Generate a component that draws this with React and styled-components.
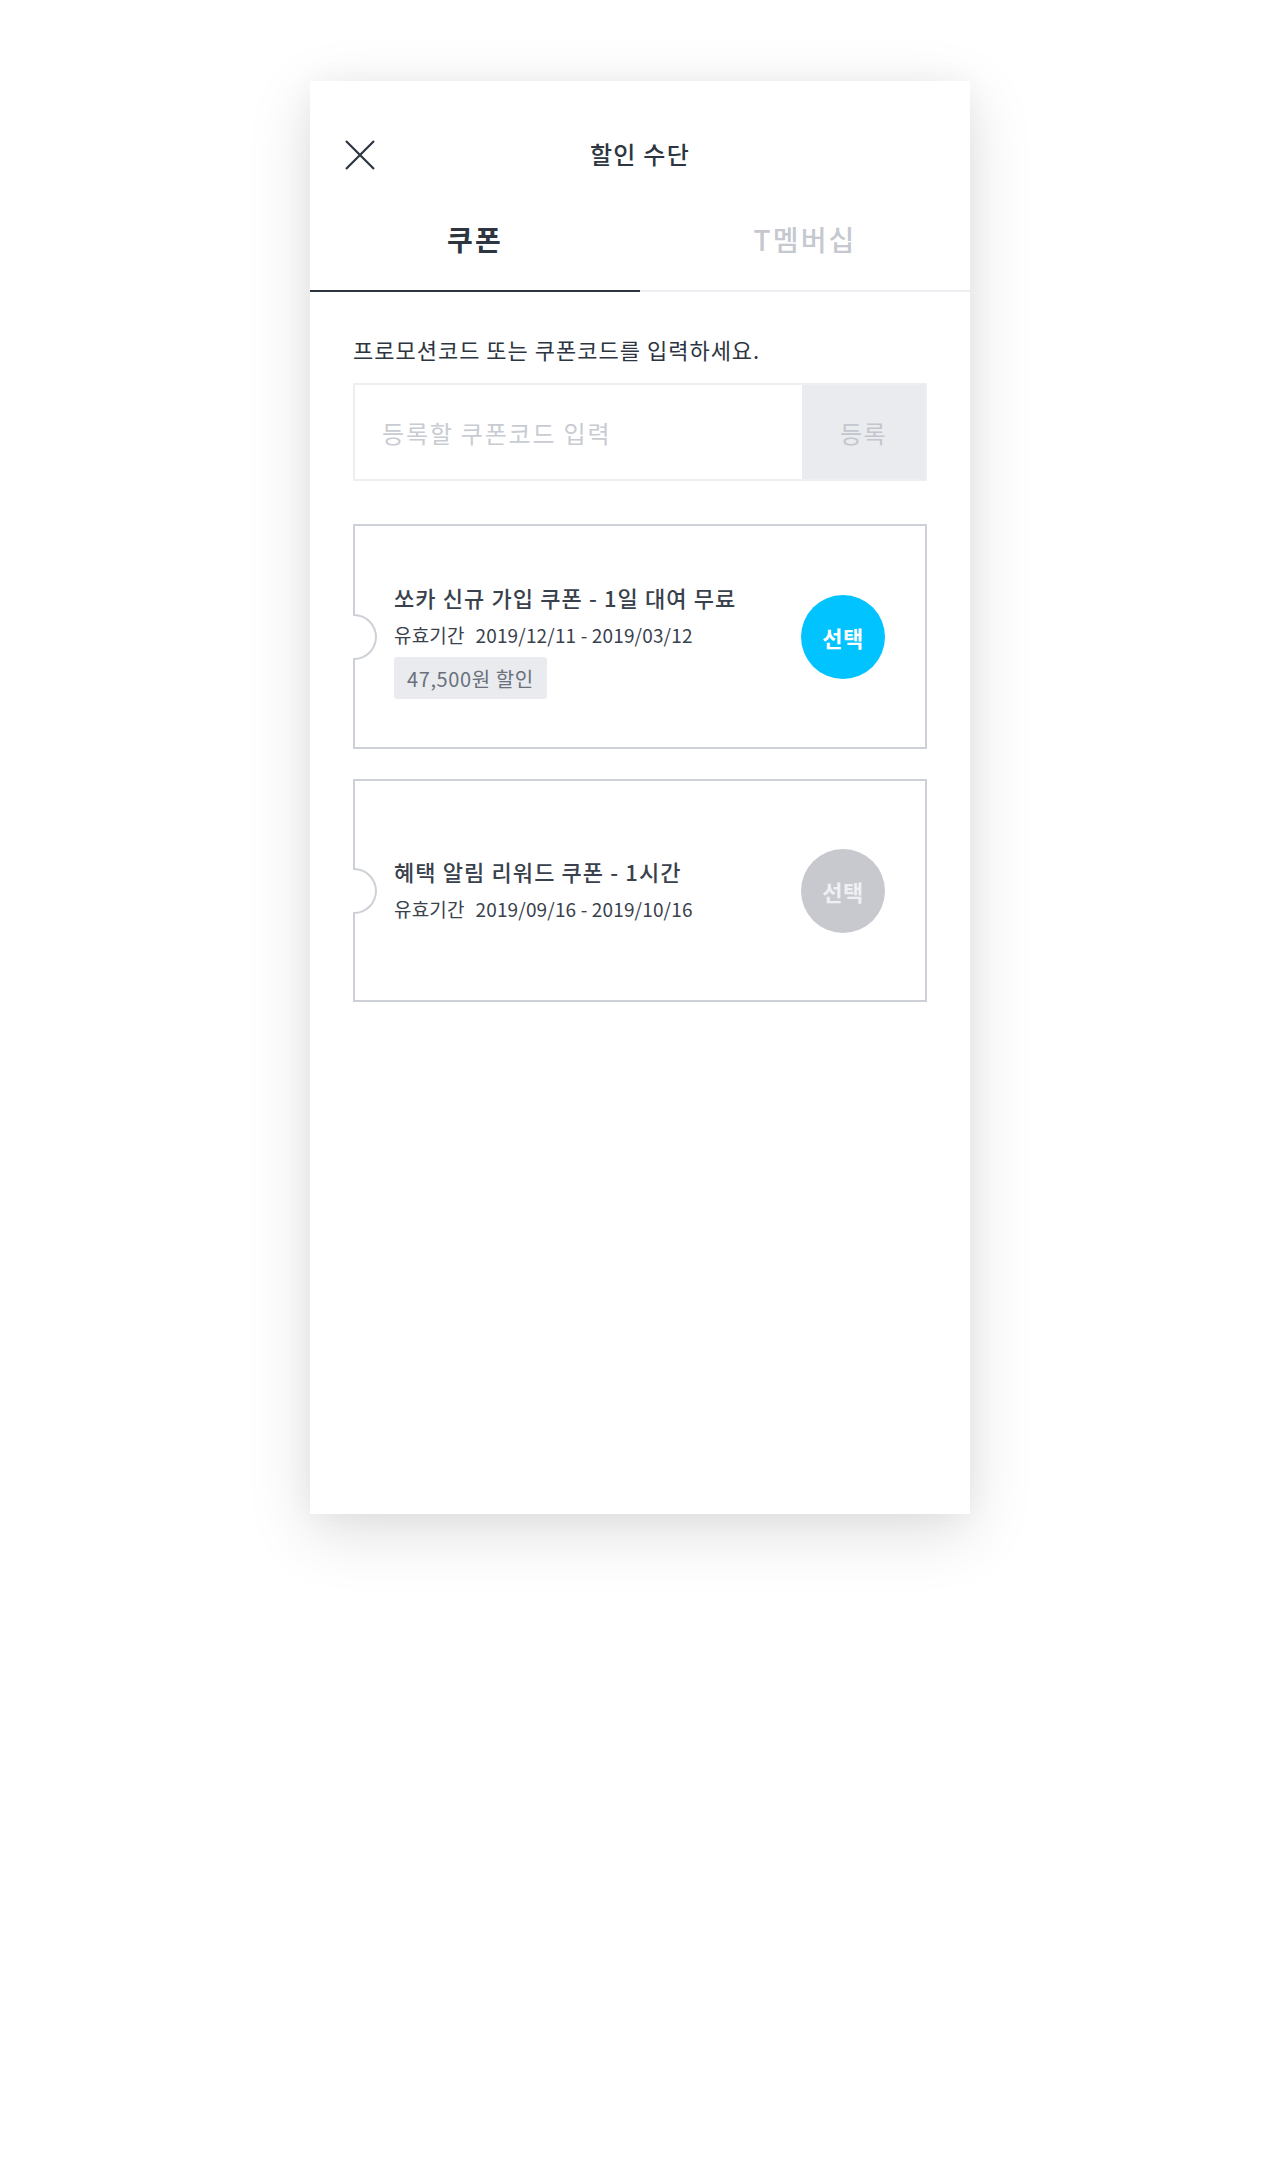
import React from "react";
import styled, { createGlobalStyle } from "styled-components";

const Global = createGlobalStyle`
  html, body { margin: 0; padding: 0; background: #ffffff; }
  body { font-family: "Noto Sans CJK KR", "Noto Sans", sans-serif; -webkit-font-smoothing: antialiased; }
  * { box-sizing: border-box; }
`;

const Page = styled.div`
  width: 1280px;
  height: 2160px;
  padding-top: 81px;
  display: flex;
  justify-content: center;
  align-items: flex-start;
`;

const Panel = styled.div`
  width: 660px;
  height: 1433px;
  background: #fff;
  box-shadow: 0 18px 60px rgba(0, 0, 0, 0.13), 0 0 30px rgba(0, 0, 0, 0.04);
  display: flex;
  flex-direction: column;
`;

const TopBar = styled.div`
  position: relative;
  height: 52px;
  margin-top: 46px;
  display: flex;
  align-items: center;
  justify-content: center;
`;

const CloseButton = styled.button`
  position: absolute;
  left: 34px;
  top: 12px;
  width: 32px;
  height: 32px;
  padding: 0;
  border: 0;
  background: none;
  display: flex;
  align-items: center;
  justify-content: center;
`;

const Title = styled.h1`
  margin: 0;
  font-size: 24px;
  font-weight: 500;
  color: #2d3540;
  letter-spacing: 1.3px;
`;

const TabBar = styled.div`
  display: flex;
`;

const Tab = styled.div`
  flex: 1;
  height: 113px;
  padding-top: 8px;
  display: flex;
  align-items: center;
  justify-content: center;
  font-size: 28px;
  font-weight: ${(p) => (p.$active ? 700 : 500)};
  color: ${(p) => (p.$active ? "#2d3540" : "#c5c8ce")};
  border-bottom: 2px solid ${(p) => (p.$active ? "#2d3540" : "#eceef1")};
  letter-spacing: 2.2px;
`;

const Content = styled.div`
  padding: 43px 43px 0;
  display: flex;
  flex-direction: column;
`;

const Label = styled.p`
  margin: 0;
  font-size: 22px;
  line-height: 28px;
  color: #2d3540;
  letter-spacing: 1px;
`;

const InputRow = styled.div`
  margin-top: 20px;
  height: 98px;
  display: flex;
  border: 2px solid #eceef1;
`;

const CodeInput = styled.div`
  flex: 1;
  display: flex;
  align-items: center;
  padding-left: 27px;
  font-size: 24px;
  color: #c8cbd1;
  letter-spacing: 1.8px;
`;

const RegisterButton = styled.div`
  width: 123px;
  background: #e9ebee;
  display: flex;
  align-items: center;
  justify-content: center;
  font-size: 24px;
  color: #c3c6cc;
  letter-spacing: 1.4px;
`;

const CouponList = styled.div`
  margin-top: 43px;
  display: flex;
  flex-direction: column;
  gap: 30px;
`;

const Coupon = styled.div`
  position: relative;
  height: ${(p) => p.$h}px;
  border: 2px solid #cdd0d6;
  display: flex;
  align-items: center;
  justify-content: space-between;
  padding: 0 40px 0 39px;
`;

const Notch = styled.span`
  position: absolute;
  left: -2px;
  top: 50%;
  width: 24px;
  height: 46px;
  margin-top: -23px;
  border: 2px solid #cdd0d6;
  border-left: 0;
  border-radius: 0 23px 23px 0;
  background: #fff;
`;

const Info = styled.div`
  display: flex;
  flex-direction: column;
  align-items: flex-start;
  margin-top: ${(p) => p.$shift}px;
`;

const CouponTitle = styled.div`
  font-size: 22px;
  line-height: 30px;
  font-weight: 500;
  color: #39414d;
  letter-spacing: 1.1px;
`;

const Period = styled.div`
  margin-top: 10px;
  font-size: 19px;
  line-height: 26px;
  color: #39414d;
  letter-spacing: 0.15px;
  span { margin-right: 11px; }
`;

const Badge = styled.div`
  margin-top: 9px;
  height: 42px;
  padding: 0 13px;
  display: flex;
  align-items: center;
  background: #e9ebee;
  border-radius: 3px;
  font-size: 20px;
  color: #6a717c;
  letter-spacing: 0.6px;
`;

const SelectButton = styled.div`
  width: 84px;
  height: 84px;
  border-radius: 50%;
  background: ${(p) => (p.$enabled ? "#00c3ff" : "#c7c9cf")};
  color: ${(p) => (p.$enabled ? "#fff" : "#eef0f3")};
  display: flex;
  align-items: center;
  justify-content: center;
  font-size: 22px;
  font-weight: 700;
  letter-spacing: 0.5px;
  flex-shrink: 0;
`;

const coupons = [
  {
    title: "쏘카 신규 가입 쿠폰 - 1일 대여 무료",
    period: "2019/12/11 - 2019/03/12",
    badge: "47,500원 할인",
    enabled: true,
    h: 225,
    shift: 8,
  },
  {
    title: "혜택 알림 리워드 쿠폰 - 1시간",
    period: "2019/09/16 - 2019/10/16",
    enabled: false,
    h: 223,
    shift: -3,
  },
];

export default function App() {
  return (
    <>
      <Global />
      <Page>
        <Panel>
          <TopBar>
            <CloseButton aria-label="닫기">
              <svg width="32" height="32" viewBox="0 0 32 32">
                <path d="M2 2 L30 30 M30 2 L2 30" stroke="#2d3540" strokeWidth="2.2" fill="none" />
              </svg>
            </CloseButton>
            <Title>할인 수단</Title>
          </TopBar>
          <TabBar>
            <Tab $active>쿠폰</Tab>
            <Tab>T멤버십</Tab>
          </TabBar>
          <Content>
            <Label>프로모션코드 또는 쿠폰코드를 입력하세요.</Label>
            <InputRow>
              <CodeInput>등록할 쿠폰코드 입력</CodeInput>
              <RegisterButton>등록</RegisterButton>
            </InputRow>
            <CouponList>
              {coupons.map((c) => (
                <Coupon key={c.title} $h={c.h}>
                  <Notch />
                  <Info $shift={c.shift}>
                    <CouponTitle>{c.title}</CouponTitle>
                    <Period>
                      <span>유효기간</span>
                      {c.period}
                    </Period>
                    {c.badge && <Badge>{c.badge}</Badge>}
                  </Info>
                  <SelectButton $enabled={c.enabled}>선택</SelectButton>
                </Coupon>
              ))}
            </CouponList>
          </Content>
        </Panel>
      </Page>
    </>
  );
}
